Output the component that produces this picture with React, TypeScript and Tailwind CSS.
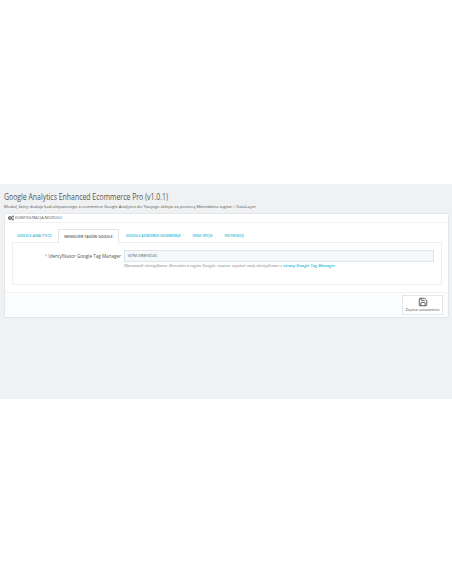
import { LuSave } from 'react-icons/lu';
import { FaCogs } from 'react-icons/fa';

const tabs = ['GOOGLE ANALYTICS', 'MENEDŻER TAGÓW GOOGLE', 'GOOGLE ADWORDS KONWERSJE', 'INNE OPCJE', 'INSTRUKCJI'];

export default function App() {
  return (
    <div className="bg-white h-[584px] font-['Open_Sans',sans-serif]">
      <div className="h-[184px]"></div>
      <div className="bg-[#eff1f2] h-[215px] px-[4px] pt-[7px]">
        <h1 className="text-[9.2px] leading-[12px] text-[#555555] font-normal h-[12px] whitespace-nowrap origin-left scale-x-[0.752]">
          Google Analytics Enhanced Ecommerce Pro (v1.0.1)
        </h1>
        <p className="text-[4.2px] leading-[7px] text-[#555555] whitespace-nowrap">
          Moduł, który dodaje kod ulepszonego e-commerce Google Analytics do Twojego sklepu za pomocą Menedżera tagów &gt; DataLayer
        </p>
        <div className="mt-[3px] w-[445px] h-[105px] bg-white border border-[#e4e7e9] rounded-[2px] flex flex-col">
          <div className="h-[9px] border-b border-[#f2f3f4] flex items-center gap-[1px] pl-[3px] text-[4px] text-[#555555]">
            <FaCogs className="text-[6px]" />
            <span>KONFIGURACJA MODUŁU</span>
          </div>
          <div className="flex-1 pl-[7px] pr-[6px] pt-[6px]">
            <div className="flex h-[14px]">
              {tabs.map((t, i) => (
                <div
                  key={t}
                  className={
                    i === 1
                      ? "h-[14px] px-[5px] flex items-center text-[3.55px] font-semibold text-[#555555] bg-white border border-b-0 border-[#e4e7e9] mr-[2px] whitespace-nowrap relative z-10"
                      : "h-[14px] px-[5px] flex items-center text-[3.55px] font-semibold text-[#25b9d7] mr-[2px] whitespace-nowrap"
                  }
                >
                  {t}
                </div>
              ))}
            </div>
            <div className="h-[43px] -mt-[1px] border border-[#eceef0] rounded-[1px] pt-[7px] pr-[7px] flex">
              <div className="w-[108px] text-right text-[4.6px] leading-[12px] text-[#555555] whitespace-nowrap">
                <span className="text-[#e08f95]">*</span> Identyfikator Google Tag Manager
              </div>
              <div className="ml-[3px] flex-1">
                <div className="h-[12px] bg-[#f5f8f9] border border-[#dbe6e9] flex items-center pl-[3px] text-[4.1px] text-[#555555]">
                  GTM-5RWVD45
                </div>
                <p className="text-[4.15px] leading-[8px] italic text-[#8a8a8a] whitespace-nowrap">
                  Wprowadź identyfikator Menedżera tagów Google, możesz uzyskać swój identyfikator z <span className="text-[#25b9d7] font-semibold">strony Google Tag Manager</span>
                </p>
              </div>
            </div>
          </div>
          <div className="h-[25px] bg-[#fcfdfe] border-t border-[#eff1f2] flex justify-end items-center pr-[5px]">
            <div className="w-[41px] h-[20px] bg-white border border-[#e4e7e9] flex flex-col items-center pt-[1px]">
              <LuSave className="text-[10px] text-[#444444]" />
              <span className="text-[4.15px] leading-[6px] text-[#555555] whitespace-nowrap">Zapisz ustawienia</span>
            </div>
          </div>
        </div>
      </div>
    </div>
  );
}
